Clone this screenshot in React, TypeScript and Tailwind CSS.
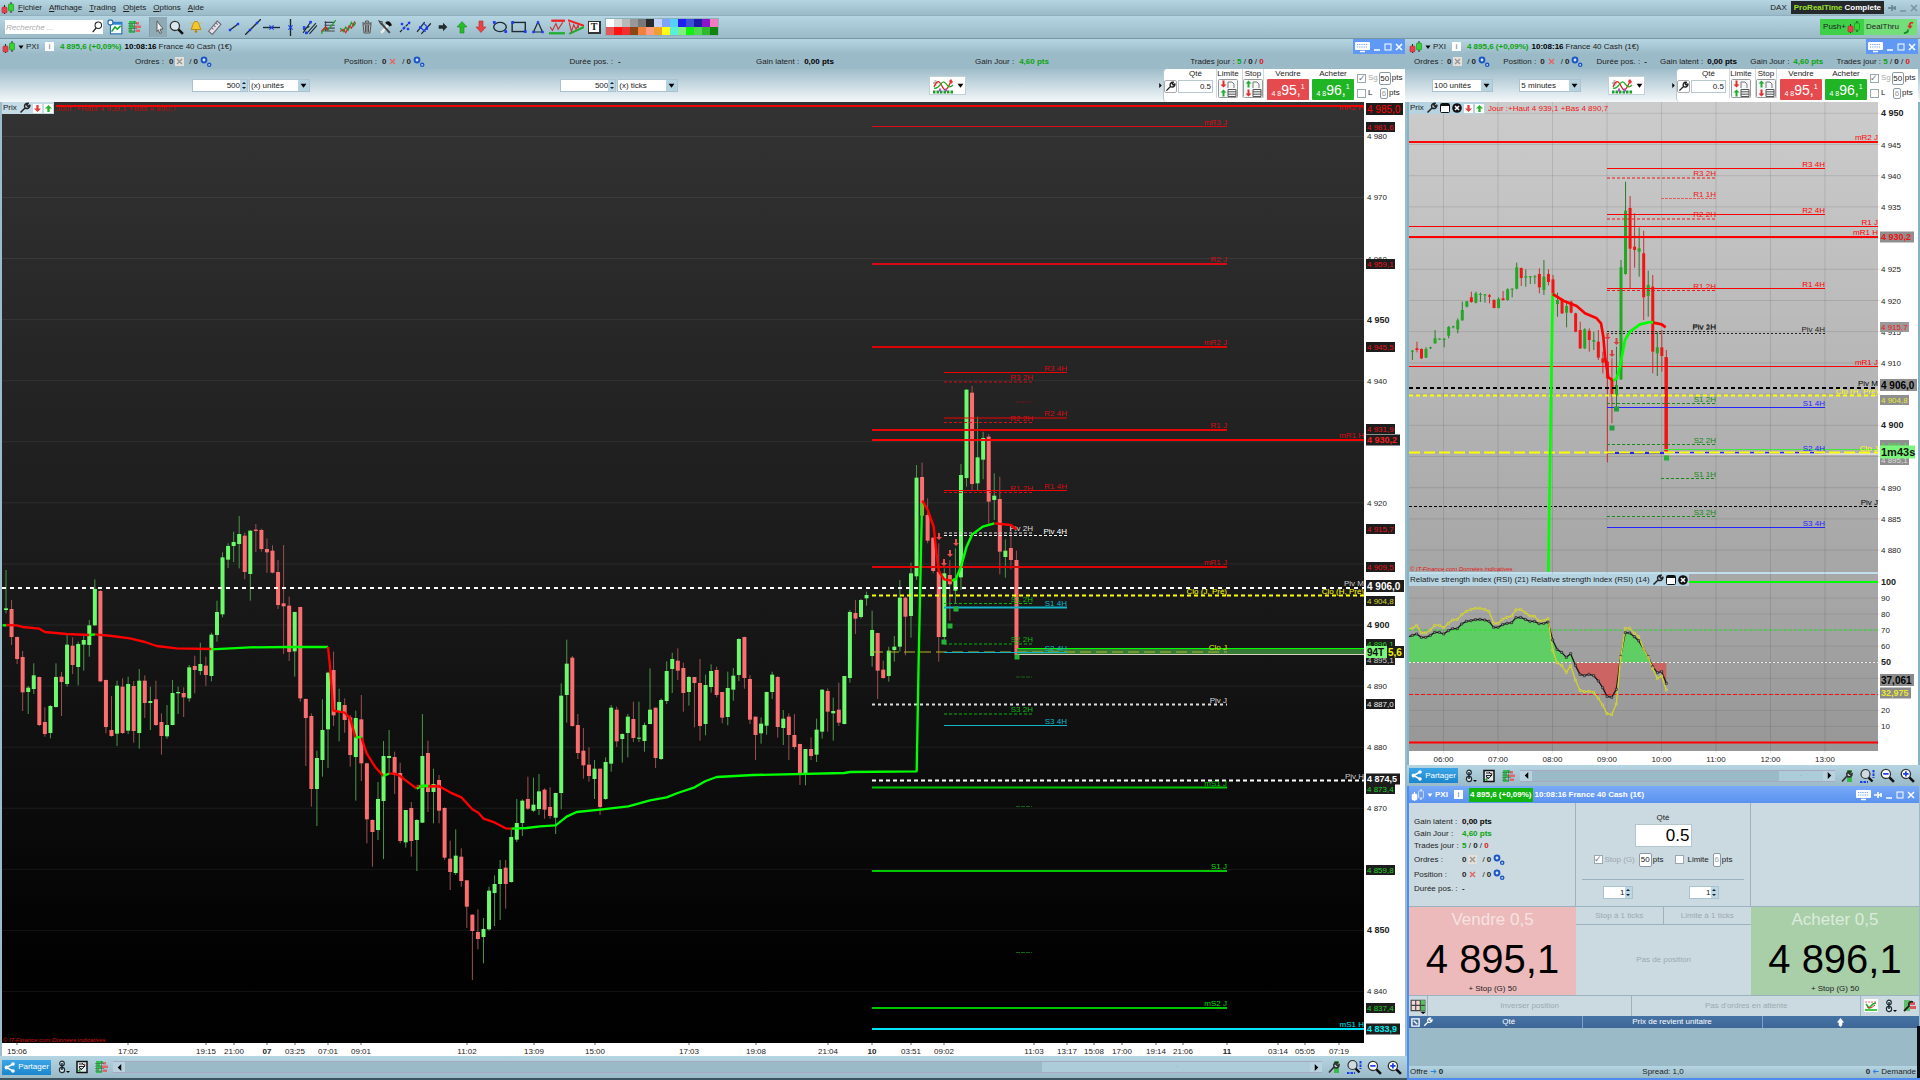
import React from "react";

type Candle = [number, number, number, number, number];

/* ---------- candle data: [up, high, bodyTop, bodyBottom, low] ---------- */

const MAIN_A: Candle[] = [
  [1, 270, 385, 390, 400], [0, 360, 387, 471, 495], [0, 470, 471, 537, 552], [0, 513, 531, 637, 693], [1, 618, 623, 636, 702],
  [1, 550, 586, 627, 642], [0, 590, 591, 735, 738], [0, 682, 726, 762, 770], [1, 675, 678, 759, 775], [1, 550, 591, 681, 683],
  [0, 576, 590, 606, 708], [1, 462, 494, 612, 620], [0, 472, 497, 555, 582], [1, 485, 492, 561, 616], [1, 465, 480, 494, 572],
  [1, 420, 436, 495, 530], [1, 298, 327, 436, 438], [0, 330, 333, 604, 606], [0, 599, 600, 741, 760], [0, 648, 750, 768, 770],
  [1, 602, 617, 761, 798], [0, 595, 620, 759, 762], [1, 590, 612, 752, 762], [0, 603, 618, 753, 788], [1, 567, 602, 759, 806],
  [0, 586, 602, 669, 714], [1, 620, 663, 669, 750], [0, 602, 658, 735, 738], [0, 700, 726, 768, 824], [1, 675, 735, 769, 776],
  [1, 600, 639, 735, 736], [1, 620, 636, 640, 702], [0, 622, 639, 652, 711], [1, 555, 562, 655, 665], [0, 527, 558, 570, 640],
  [1, 488, 552, 573, 585], [0, 530, 557, 585, 618], [1, 458, 464, 588, 604], [1, 362, 396, 465, 485], [1, 217, 232, 403, 412],
  [1, 190, 198, 239, 264], [1, 155, 186, 198, 246], [1, 108, 162, 192, 265], [0, 158, 167, 276, 298], [1, 151, 152, 282, 362],
  [0, 132, 149, 153, 216], [0, 146, 150, 207, 215], [0, 175, 207, 217, 278], [0, 196, 212, 278, 280], [0, 240, 276, 375, 387],
  [0, 195, 370, 379, 522], [0, 350, 377, 516, 543], [1, 395, 396, 514, 590], [0, 380, 381, 655, 665], [0, 655, 657, 714, 858],
  [0, 700, 708, 927, 980], [1, 812, 834, 927, 1038], [1, 658, 750, 840, 890], [1, 575, 578, 748, 864], [0, 515, 570, 706, 738],
  [1, 626, 666, 694, 784], [0, 655, 675, 720, 758], [0, 705, 712, 825, 860], [1, 692, 714, 831, 962], [0, 645, 718, 850, 903],
  [0, 848, 850, 1018, 1090], [0, 1018, 1020, 1056, 1160], [1, 906, 957, 1050, 1080], [1, 783, 828, 963, 1137], [1, 750, 828, 834, 880],
  [0, 815, 831, 885, 942], [0, 848, 879, 1083, 1090], [1, 990, 990, 1087, 1103], [0, 966, 984, 1083, 1130], [1, 1018, 1020, 1080, 1173],
];

const MAIN_B: Candle[] = [
  [1, 342, 468, 668, 669], [0, 422, 459, 576, 636], [1, 506, 552, 576, 670], [0, 525, 540, 632, 670], [0, 622, 624, 773, 780],
  [0, 722, 776, 816, 870], [1, 688, 767, 819, 825], [0, 745, 770, 843, 860], [0, 840, 841, 920, 984], [0, 943, 944, 993, 1140],
  [0, 928, 996, 1017, 1048], [1, 954, 987, 1011, 1090], [1, 860, 872, 988, 992], [1, 826, 852, 879, 978], [1, 780, 807, 852, 960],
  [0, 780, 803, 852, 926], [1, 690, 711, 846, 848], [1, 597, 669, 719, 726], [1, 598, 602, 669, 708], [0, 530, 597, 626, 630],
  [1, 533, 614, 632, 636], [1, 522, 574, 627, 645], [0, 565, 569, 629, 656], [0, 562, 621, 648, 656], [1, 578, 579, 653, 702],
  [1, 250, 287, 579, 628], [1, 119, 191, 285, 368], [0, 168, 173, 378, 380], [0, 342, 375, 459, 477], [0, 384, 452, 496, 536],
  [0, 442, 494, 528, 545], [1, 480, 506, 537, 597], [0, 506, 506, 621, 645], [1, 472, 486, 597, 600], [1, 315, 323, 491, 515],
  [0, 320, 329, 424, 441], [1, 400, 402, 417, 488], [1, 342, 350, 399, 472], [0, 305, 357, 414, 426], [1, 305, 413, 416, 426],
  [1, 368, 375, 423, 455], [1, 205, 329, 372, 373], [0, 323, 323, 474, 504], [1, 295, 300, 477, 480], [1, 184, 213, 303, 312],
  [1, 158, 177, 207, 279], [0, 145, 182, 212, 240], [0, 188, 204, 279, 335], [1, 228, 231, 276, 317], [0, 231, 231, 249, 382],
  [0, 177, 249, 378, 422], [1, 224, 255, 372, 406], [1, 193, 213, 261, 278], [0, 200, 210, 285, 292], [0, 276, 276, 353, 370],
  [1, 215, 264, 351, 376], [1, 204, 227, 269, 302], [1, 115, 117, 225, 243], [0, 110, 111, 234, 266], [0, 225, 237, 359, 372],
  [0, 350, 350, 405, 480], [1, 352, 371, 400, 431], [1, 275, 276, 377, 404], [1, 215, 224, 276, 297], [0, 228, 231, 381, 413],
  [1, 330, 356, 384, 435], [0, 340, 350, 405, 480], [0, 342, 405, 441, 448], [0, 431, 432, 521, 555], [1, 447, 447, 521, 556],
  [0, 412, 447, 468, 480], [1, 356, 389, 464, 486], [1, 268, 269, 395, 416], [0, 265, 273, 335, 395], [1, 293, 333, 340, 422],
  [0, 248, 329, 368, 378], [1, 228, 228, 372, 373], [1, 30, 36, 234, 248], [0, 0, 39, 56, 102], [1, -3, 0, 51, 56], [1, -25, -15, -5, 17],
];

const MAIN_C: Candle[] = [
  [1, 812, 870, 948, 980], [0, 878, 879, 992, 1077], [0, 962, 989, 1014, 1016], [1, 920, 932, 1008, 1025], [1, 888, 920, 930, 965],
  [1, 720, 773, 920, 935], [0, 770, 773, 830, 946], [1, 668, 700, 828, 893], [1, 375, 413, 709, 720], [0, 368, 411, 527, 530],
  [0, 475, 525, 602, 610], [0, 592, 593, 693, 700], [0, 610, 695, 891, 965], [1, 685, 700, 891, 905], [0, 660, 705, 733, 842],
  [1, 625, 715, 752, 790], [1, 372, 405, 712, 750], [1, 148, 149, 414, 440], [0, 138, 158, 432, 452], [1, 230, 352, 430, 452],
  [1, 275, 294, 359, 418], [0, 282, 290, 485, 552], [1, 400, 467, 480, 540], [0, 410, 477, 635, 703], [1, 598, 632, 651, 713],
  [0, 562, 624, 660, 688], [0, 632, 660, 945, 955],
];

const SMALL: Candle[] = [
  [1, 180, 182, 185, 210], [0, 155, 175, 180, 187], [0, 175, 177, 205, 207], [1, 172, 177, 203, 204], [1, 170, 172, 174, 177],
  [1, 120, 145, 160, 161], [1, 145, 146, 148, 149], [1, 145, 146, 150, 172], [1, 108, 111, 137, 145], [1, 107, 109, 111, 115],
  [1, 85, 91, 118, 130], [1, 35, 60, 91, 92], [1, 33, 34, 50, 52], [0, 5, 22, 36, 38], [1, 5, 10, 38, 40], [1, 8, 12, 14, 36],
  [1, 12, 13, 15, 38], [0, 12, 16, 20, 40], [0, 28, 30, 54, 55], [1, 22, 27, 54, 55], [0, 3, 25, 30, 32], [1, -5, -2, 30, 32],
  [1, -5, -4, -2, 22], [1, -82, -68, -4, -2], [0, -67, -66, -36, -12], [1, -62, -41, -37, -10], [1, -42, -41, -39, -18],
  [1, -45, -41, -39, -18], [0, -65, -48, -8, 10], [1, -90, -40, 0, 15], [0, -62, -48, -24, -14], [0, -45, -32, 10, 15],
  [1, 8, 30, 42, 80], [0, 25, 28, 70, 72], [1, 35, 48, 68, 112], [0, 32, 35, 68, 70], [0, 68, 70, 125, 127], [0, 95, 120, 175, 177],
  [1, 115, 118, 175, 177], [0, 115, 122, 150, 185], [1, 125, 150, 155, 180], [0, 120, 155, 203, 210], [0, 185, 205, 218, 250],
  [0, 150, 215, 265, 517], [0, 205, 270, 312, 400], [1, 170, 285, 315, 355], [1, -90, -68, 268, 270], [1, -325, -238, -48, -46],
  [0, -282, -246, -124, -4], [0, -230, -130, -120, -67], [1, -187, -125, -115, -40], [0, -178, -110, 22, 90], [1, -58, -15, 18, 80],
  [0, -45, -10, 185, 250], [1, 125, 172, 190, 258], [0, 120, 172, 198, 245], [0, 180, 203, 485, 487],
];

const RSI21 =
  "27,230 37,226 50,222 64,232 77,232 91,226 104,217 118,217 131,222 145,212 158,206 172,206 185,192 199,184 213,182 226,179 240,178 254,180 267,184 281,202 294,202 308,194 321,190 335,188 348,173 362,172 376,178 390,184 403,184 417,191 431,190 444,186 458,240 471,268 485,277 499,292 512,281 526,316 540,343 553,347 567,343 581,347 595,363 608,383 621,409 635,412 649,388 662,290 676,218 689,219 703,230 716,242 731,268 745,290 758,320 772,338 785,335 799,370";
const RSI14 =
  "27,206 37,205 50,196 64,219 77,219 91,210 104,196 118,196 131,203 145,190 158,180 172,178 185,164 199,154 213,148 226,145 240,145 254,148 267,154 281,190 294,190 308,178 321,172 335,168 348,149 362,148 376,158 390,168 403,168 417,183 431,182 444,176 458,270 471,308 485,316 499,337 512,317 526,360 540,391 553,395 567,394 581,397 595,415 608,435 621,461 635,464 649,432 662,292 676,205 689,205 703,220 716,230 731,268 745,292 758,325 772,355 785,348 799,390";

/* ---------- chart primitives ---------- */

function Candles({ data, start, x0, step, y0, up, down, upWick, downWick, w }: {
  data: Candle[]; start: number; x0: number; step: number; y0: number;
  up: string; down: string; upWick: string; downWick: string; w: number;
}) {
  return (
    <g>
      {data.map(([u, hi, top, bot, lo], i) => {
        const x = x0 + step * (start + i);
        return (
          <g key={i}>
            <rect x={x - 0.5} y={y0 + hi / 3} width={1} height={Math.max(1, (lo - hi) / 3)} fill={u ? upWick : downWick} />
            <rect x={x - w / 2} y={y0 + top / 3} width={w} height={Math.max(1, (bot - top) / 3)} fill={u ? up : down} />
          </g>
        );
      })}
    </g>
  );
}

function Level({ x1, x2, y, c, w = 1, dash, label, lc }: {
  x1: number; x2: number; y: number; c: string; w?: number; dash?: string; label?: string; lc?: string;
}) {
  return (
    <g>
      <line x1={x1} x2={x2} y1={y} y2={y} stroke={c} strokeWidth={w} strokeDasharray={dash} />
      {label && <text x={x2} y={y - 2} textAnchor="end" fontSize={8} fill={lc ?? c}>{label}</text>}
    </g>
  );
}

function Tag({ x, y, t, fg, bg, size = 8, bold, w }: {
  x: number; y: number; t: string; fg: string; bg: string; size?: number; bold?: boolean; w: number;
}) {
  const h = size + 2;
  return (
    <g>
      <rect x={x - 1} y={y - h / 2} width={w} height={h} fill={bg} />
      <text x={x} y={y + size * 0.36} fontSize={size} fill={fg} fontWeight={bold ? 700 : 400}>{t}</text>
    </g>
  );
}

const Down = ({ x, y, c }: { x: number; y: number; c: string }) => (
  <path d={`M${x - 1} ${y - 4}h2v4h2l-3 3-3-3h2z`} fill={c} />
);
const Sq = ({ x, y, c }: { x: number; y: number; c: string }) => (
  <rect x={x - 2.5} y={y - 2.5} width={5} height={5} fill={c} />
);

const RED = "#f00505";
const DRED = "#d80a14";
const TRED = "#e8141c";
const LIME = "#00ff00";

function MainChart() {
  const px = (p: number) => 625 - (p - 4900) * 6.108;
  const common = { x0: 6, step: 5.552, up: "#6cf96c", down: "#fb6e70", upWick: "#4a974a", downWick: "#9c5050", w: 4 };
  const ticks = [4980, 4970, 4960, 4950, 4940, 4930, 4920, 4910, 4900, 4890, 4880, 4870, 4860, 4850, 4840];
  const times: [string, number, boolean?][] = [
    ["15:06", 17], ["17:02", 128], ["19:15", 206], ["21:00", 234], ["07", 267, true], ["03:25", 295], ["07:01", 328], ["09:01", 361],
    ["11:02", 467], ["13:09", 534], ["15:00", 595], ["17:03", 689], ["19:08", 756], ["21:04", 828], ["10", 872, true], ["03:51", 911],
    ["09:02", 944], ["11:03", 1034], ["13:17", 1067], ["15:08", 1094], ["17:00", 1122], ["19:14", 1156], ["21:06", 1183],
    ["11", 1227, true], ["03:14", 1278], ["05:05", 1305], ["07:19", 1339],
  ];
  return (
    <svg viewBox="0 102 1407 954" preserveAspectRatio="xMinYMin meet" className="absolute inset-0 size-full" role="img" aria-label="France 40 Cash 500 ticks">
      <defs>
        <linearGradient id="dark" x1="0" y1="0" x2="0" y2="1">
          <stop offset="0" stopColor="#333333" />
          <stop offset="0.5" stopColor="#1a1a1a" />
          <stop offset="0.9" stopColor="#020202" />
          <stop offset="1" stopColor="#000000" />
        </linearGradient>
      </defs>
      <rect x={0} y={102} width={1407} height={954} fill="#fff" />
      <rect x={0} y={102} width={2} height={954} fill="#9bbccb" />
      <rect x={1405} y={102} width={2} height={954} fill="#9bbccb" />
      <rect x={2} y={102} width={1362} height={941} fill="url(#dark)" />
      {ticks.map((t) => (
        <g key={t}>
          <line x1={2} x2={1364} y1={px(t)} y2={px(t)} stroke="#fff" strokeOpacity={0.07} />
          {t !== 4930 && t !== 4860 && (
            <text x={1367} y={px(t) + 3} fontSize={t % 50 === 0 ? 9 : 8} fontWeight={t % 50 === 0 ? 700 : 400} fill="#222">
              {"4 " + (t - 4000)}
            </text>
          )}
        </g>
      ))}

      <text x={56} y={111} fontSize={8} fill="#b80d0d">Jour :+Haut 4 939,1 +Bas 4 890,7</text>
      <text x={1364} y={110} textAnchor="end" fontSize={8} fill={DRED}>mR2 H</text>
      <line x1={56} x2={1364} y1={106} y2={106} stroke={RED} strokeWidth={2} />

      <Candles data={MAIN_A} start={0} y0={480} {...common} />
      <Candles data={MAIN_B} start={75} y0={600} {...common} />
      <Candles data={MAIN_C} start={156} y0={340} {...common} />

      <rect x={1017} y={648} width={347} height={6} fill="#357a35" />
      <line x1={1017} x2={1364} y1={648.5} y2={648.5} stroke={LIME} />
      <line x1={1017} x2={1364} y1={654.5} y2={654.5} stroke="#d6d0c0" />

      <Level x1={872} x2={1227} y={126.5} c={DRED} label="mR3 J" />
      <Level x1={872} x2={1227} y={264} w={2} c={DRED} label="R2 J" />
      <Level x1={872} x2={1227} y={347} w={2} c="#dc0505" label="mR2 J" lc={DRED} />
      <Level x1={872} x2={1227} y={430} w={2} c="#e80505" label="R1 J" lc={DRED} />
      <Level x1={872} x2={1364} y={440} w={2} c="#ff0000" label="mR1 H" lc={DRED} />
      <Level x1={872} x2={1227} y={567} w={2} c="#dc0505" label="mR1 J" lc={DRED} />
      <Level x1={2} x2={1364} y={588} w={2} dash="4 4" c="#fff" label="Piv M" lc="#ccc" />
      <Level x1={872} x2={1227} y={595.5} w={2} dash="4 3" c="#ff0" label="Clo (J, Pré)" />
      <Level x1={1227} x2={1364} y={595.5} w={2} dash="4 3" c="#ff0" label="Clo (H, Pré)" />
      <Level x1={872} x2={1227} y={652} dash="11 5" c="#b5b52a" label="Clo J" lc="#e8e800" />
      <Level x1={872} x2={1227} y={704.5} w={2} dash="3 3" c="#ddd" label="Piv J" lc="#ddd" />
      <Level x1={872} x2={1364} y={780.5} w={2} dash="4 3" c="#fff" label="Piv H" lc="#ccc" />
      <Level x1={872} x2={1227} y={787.5} w={2} c="#00c800" label="mS1 J" />
      <Level x1={872} x2={1227} y={871} w={2} c="#00c800" label="S1 J" lc="#0d0" />
      <Level x1={872} x2={1227} y={1008} w={2} c="#00c800" label="mS2 J" lc="#0d0" />
      <Level x1={872} x2={1364} y={1029} w={2} c="#00e5f5" label="mS1 H" />

      <Level x1={944} x2={1067} y={372.5} c={RED} label="R3 4H" lc={DRED} />
      <Level x1={944} x2={1067} y={418} c={RED} label="R2 4H" lc={DRED} />
      <Level x1={944} x2={1067} y={490.5} c={RED} label="R1 4H" lc={DRED} />
      <Level x1={944} x2={1067} y={535.5} dash="3 2" c="#fff" label="Piv 4H" />
      <Level x1={944} x2={1067} y={607.5} w={2} c="#14b4c8" label="S1 4H" />
      <Level x1={944} x2={1067} y={652.5} c="#14b4c8" label="S2 4H" />
      <Level x1={944} x2={1067} y={725.5} c="#14b4c8" label="S3 4H" />
      <Level x1={944} x2={1033} y={382} dash="3 2" c={DRED} label="R3 2H" />
      <Level x1={944} x2={1033} y={422.5} dash="3 2" c={DRED} label="R2 2H" />
      <Level x1={944} x2={1033} y={492.5} dash="3 2" c={DRED} label="R1 2H" />
      <Level x1={944} x2={1033} y={533} dash="3 2" c="#ddd" label="Piv 2H" />
      <Level x1={944} x2={1033} y={603.5} dash="3 2" c="#0ab40a" label="S1 2H" />
      <Level x1={944} x2={1033} y={644} dash="3 2" c="#0ab40a" label="S2 2H" />
      <Level x1={944} x2={1033} y={714} dash="3 2" c="#0ab40a" label="S3 2H" />
      <Level x1={1016} x2={1032} y={402} dash="4 1" c="#6a1520" />
      <Level x1={1016} x2={1032} y={677} dash="4 1" c="#176117" />
      <Level x1={1016} x2={1032} y={806.5} dash="4 1" c="#176117" />
      <Level x1={1016} x2={1032} y={952.5} dash="4 1" c="#176117" />

      <g fill="none" strokeWidth={7} strokeLinejoin="round">
        <g transform="translate(0 480) scale(0.33333)">
          <polyline stroke={LIME} points="8,436 20,436" />
          <polyline stroke="#f00" points="18,435 50,436 68,441 118,446 135,456 200,462 268,465" />
          <polyline stroke="#f00" points="285,463 335,468 390,475 435,486 470,498 530,505 634,507" />
          <polyline stroke={LIME} points="268,465 285,463" />
          <polyline stroke={LIME} points="634,508 750,502 868,501 984,501" />
          <polyline stroke="#f00" points="984,501 990,560 1000,692 1034,698 1050,715 1067,773" />
          <polyline stroke="#f00" points="1084,772 1100,820 1125,860 1150,888" />
          <polyline stroke="#f00" points="1167,881 1184,881 1200,888 1225,907 1250,926" />
          <polyline stroke={LIME} points="1067,773 1084,771" />
          <polyline stroke={LIME} points="1150,888 1167,881" />
          <polyline stroke={LIME} points="1250,926 1268,917 1284,916" />
          <polyline stroke="#f00" points="1284,918 1320,918" />
        </g>
        <g transform="translate(420 600) scale(0.33333)">
          <polyline stroke="#f00" points="-10,558 60,560 90,577 124,592 157,628 175,638 191,656 225,668 257,685 274,686" />
          <polyline stroke={LIME} points="-3,559 25,558" />
          <polyline stroke={LIME} points="274,686 320,684 360,679 407,676 440,650 470,636 540,629 625,619 690,601 740,592 773,579 824,562 857,543 890,531 1000,525 1273,519 1290,516 1490,514 1496,180 1506,-290" />
        </g>
        <g transform="translate(860 340) scale(0.35076 0.33333)">
          <polyline stroke="#f00" points="178,482 193,510 210,560 218,640 225,695 240,718 262,722" />
          <polyline stroke={LIME} points="262,722 273,718 288,680 304,620 320,583 350,560 383,550" />
          <polyline stroke="#f00" points="383,550 430,555 446,568" />
        </g>
      </g>

      <Down x={939} y={537} c="#e8504f" />
      <Down x={944} y={563} c="#e8504f" />
      <Down x={950} y={554} c="#e8504f" />
      <Down x={956} y={543} c="#e8504f" />
      <Sq x={944} y={642} c="#22b53a" />
      <Sq x={950} y={626} c="#22b53a" />
      <Sq x={956} y={609} c="#22b53a" />
      <Sq x={1017} y={657} c="#22b53a" />
      <text x={3} y={1042} fontSize={6} fontStyle="italic" fill="#d01010">© IT-Finance.com Données indicatives</text>

      <Tag x={1367} y={109} w={37} t="4 985,0" fg="#f00" bg="#1d1d1d" size={10} />
      <Tag x={1367} y={127} w={29} t="4 981,6" fg={TRED} bg="#1d1d1d" />
      <Tag x={1367} y={264} w={29} t="4 959,1" fg={TRED} bg="#1d1d1d" />
      <Tag x={1367} y={347} w={29} t="4 945,5" fg={TRED} bg="#1d1d1d" />
      <Tag x={1367} y={429} w={29} t="4 931,9" fg={TRED} bg="#1d1d1d" />
      <Tag x={1367} y={440} w={34} t="4 930,2" fg="#f02020" bg="#1d1d1d" size={9} bold />
      <Tag x={1367} y={529} w={29} t="4 915,7" fg={TRED} bg="#1d1d1d" />
      <Tag x={1367} y={567} w={29} t="4 909,5" fg={TRED} bg="#1d1d1d" />
      <Tag x={1367} y={601} w={29} t="4 904,8" fg="#d8d82a" bg="#1d1d1d" />
      <Tag x={1367} y={586} w={38} t="4 906,0" fg="#fff" bg="#1d1d1d" size={10} bold />
      <Tag x={1367} y={644} w={29} t="4 896,1" fg="#2c2" bg="#1d1d1d" />
      <Tag x={1367} y={660} w={29} t="4 895,1" fg="#ccc" bg="#1d1d1d" />
      <Tag x={1388} y={652} w={17} t="5,6" fg="#f2f20a" bg="#1d1d1d" size={10} bold />
      <Tag x={1367} y={652} w={21} t="94T" fg="#111" bg="#7cf57c" size={10} bold />
      <Tag x={1367} y={704} w={29} t="4 887,0" fg="#eee" bg="#1d1d1d" />
      <Tag x={1367} y={789} w={29} t="4 873,4" fg="#2c2" bg="#1d1d1d" />
      <Tag x={1367} y={779} w={34} t="4 874,5" fg="#fff" bg="#1d1d1d" size={9} bold />
      <Tag x={1367} y={870} w={29} t="4 859,8" fg="#2c2" bg="#1d1d1d" />
      <Tag x={1367} y={1008} w={29} t="4 837,4" fg="#2c2" bg="#1d1d1d" />
      <Tag x={1367} y={1029} w={34} t="4 833,9" fg="#0ee" bg="#1d1d1d" size={9} bold />

      {times.map(([t, x, b], i) => (
        <g key={i}>
          <line x1={x} x2={x} y1={1043} y2={1045} stroke="#666" />
          <text x={x} y={1054} textAnchor="middle" fontSize={8} fontWeight={b ? 700 : 400} fill="#222">{t}</text>
        </g>
      ))}
    </svg>
  );
}

function Dots({ points, c }: { points: string; c: string }) {
  return (
    <g>
      {points.split(" ").slice(1).map((p) => {
        const [x, y] = p.split(",").map(Number);
        return <rect key={p} x={x - 3} y={y - 3} width={6} height={6} fill="#a3a3a3" stroke={c} strokeWidth={2} />;
      })}
    </g>
  );
}

function SideChart() {
  const px = (p: number) => 425.3 - (p - 4900) * 6.24;
  const rs = (v: number) => 742.5 - v * 1.605;
  const prices = [4950, 4945, 4940, 4935, 4930, 4925, 4920, 4915, 4910, 4905, 4900, 4895, 4890, 4885, 4880];
  const hours = ["06:00", "07:00", "08:00", "09:00", "10:00", "11:00", "12:00", "13:00"];
  return (
    <svg viewBox="1407 102 513 663" preserveAspectRatio="xMinYMin meet" className="absolute inset-0 size-full" role="img" aria-label="France 40 Cash 5 minutes">
      <defs>
        <linearGradient id="grey" x1="0" y1="0" x2="0" y2="1">
          <stop offset="0" stopColor="#cccccc" />
          <stop offset="1" stopColor="#a6a6a6" />
        </linearGradient>
        <linearGradient id="grey2" x1="0" y1="0" x2="0" y2="1">
          <stop offset="0" stopColor="#a8a8a8" />
          <stop offset="1" stopColor="#979797" />
        </linearGradient>
        <clipPath id="over"><rect x={0} y={0} width={900} height={308} /></clipPath>
        <clipPath id="under"><rect x={0} y={308} width={900} height={300} /></clipPath>
      </defs>
      <rect x={1407} y={102} width={513} height={663} fill="#fff" />
      <rect x={1407} y={102} width={2} height={663} fill="#86b2c6" />
      <rect x={1918} y={102} width={2} height={663} fill="#86b2c6" />
      <rect x={1409} y={102} width={469} height={470} fill="url(#grey)" />
      <rect x={1409} y={572} width={469} height={2} fill="#bfe0ec" />
      <rect x={1409} y={574} width={469} height={177} fill="url(#grey2)" />
      {prices.map((p) => (
        <g key={p}>
          <line x1={1409} x2={1880} y1={px(p)} y2={px(p)} stroke="#000" strokeOpacity={0.1} />
          {p !== 4930 && p !== 4905 && p !== 4895 && (
            <text x={1881} y={px(p) + 3} fontSize={p % 50 === 0 ? 9 : 8} fontWeight={p % 50 === 0 ? 700 : 400} fill="#222">
              {"4 " + (p - 4000)}
            </text>
          )}
        </g>
      ))}
      {hours.map((h, i) => (
        <g key={h}>
          <line x1={1443.5 + i * 54.5} x2={1443.5 + i * 54.5} y1={102} y2={753} stroke="#000" strokeOpacity={0.1} />
          <text x={1443.5 + i * 54.5} y={762} fontSize={8} textAnchor="middle" fill="#222">{h}</text>
        </g>
      ))}

      <Candles data={SMALL} start={0} x0={1412.4} step={4.535} y0={290} up="#22a822" down="#f01414" upWick="#2c7a2c" downWick="#c83232" w={3} />
      <rect x={1664.5} y={357} width={3} height={95} fill="#f01414" />

      <Level x1={1409} x2={1878} y={142} w={2} c="#fa0808" label="mR2 J" />
      <Level x1={1607} x2={1825} y={168.5} c="#ff0000" label="R3 4H" />
      <Level x1={1607} x2={1716} y={178} dash="3 2" c="#f01414" label="R3 2H" />
      <Level x1={1661} x2={1716} y={198.5} dash="3 1" c="#e06060" label="R1 1H" lc="#f01414" />
      <Level x1={1607} x2={1825} y={214.5} c="#ff0000" label="R2 4H" />
      <Level x1={1607} x2={1716} y={219} dash="3 2" c="#f01414" label="R2 2H" />
      <Level x1={1409} x2={1878} y={226.5} c="#ff0000" label="R1 J" />
      <Level x1={1409} x2={1878} y={237} w={2} c="#ff0000" label="mR1 H" />
      <Level x1={1607} x2={1825} y={288.5} c="#ff0000" label="R1 4H" />
      <Level x1={1607} x2={1716} y={290.5} dash="3 2" c="#f01414" label="R1 2H" />
      <Level x1={1607} x2={1716} y={331.5} dash="2 2" c="#222" label="Piv 2H" />
      <Level x1={1607} x2={1825} y={333.5} dash="2 2" c="#222" label="Piv 4H" />
      <text x={1716} y={329} textAnchor="end" fontSize={8} fill="#222">Piv 1H</text>
      <Level x1={1409} x2={1878} y={366.5} c="#ff0000" label="mR1 J" />
      <Level x1={1409} x2={1878} y={388} w={2} dash="4 3" c="#000" label="Piv M" />
      <Level x1={1409} x2={1878} y={395.5} w={2} dash="4 3" c="#ff0" label="Clo (H, Pré)" />
      <Level x1={1607} x2={1716} y={403.5} dash="3 2" c="#178a17" label="S1 2H" />
      <Level x1={1607} x2={1825} y={407.5} c="#2424ff" label="S1 4H" />
      <Level x1={1607} x2={1716} y={444.5} dash="3 2" c="#178a17" label="S2 2H" />
      <Level x1={1664} x2={1878} y={449.5} c="#3be83b" />
      <Level x1={1607} x2={1825} y={453} w={2} c="#2424ff" label="S2 4H" />
      <Level x1={1664} x2={1878} y={454} c="#fff" />
      <Level x1={1409} x2={1878} y={452.5} w={2} dash="11 4" c="#ff0" label="Clo J" />
      <Level x1={1661} x2={1716} y={478.5} dash="3 2" c="#178a17" label="S1 1H" />
      <Level x1={1409} x2={1878} y={506.5} dash="3 2" c="#000" label="Piv J" />
      <Level x1={1607} x2={1716} y={516.5} dash="3 2" c="#178a17" label="S3 2H" />
      <Level x1={1607} x2={1825} y={527.5} c="#2424ff" label="S3 4H" />

      <g transform="translate(1400 290) scale(0.33333)" fill="none" strokeWidth={8} strokeLinejoin="round">
        <polyline stroke={LIME} points="445,845 450,540 458,10" />
        <polyline stroke="#f00" points="458,12 490,32 530,48 555,70 590,85 603,100 610,140 615,200 625,262 640,272" />
        <polyline stroke={LIME} points="640,272 650,265 660,230 675,150 690,125 720,103 750,96 760,98" />
        <polyline stroke="#f00" points="760,98 785,103 797,112" />
      </g>
      <Down x={1607.5} y={337} c="#e03c3c" />
      <Down x={1612} y={354} c="#e03c3c" />
      <Down x={1616.5} y={342} c="#e03c3c" />
      <Sq x={1612} y={428} c="#22a040" />
      <Sq x={1616.5} y={409} c="#22a040" />
      <Sq x={1666.5} y={458} c="#22b53a" />

      <text x={1488} y={111} fontSize={8} fill="#f01414">Jour :+Haut 4 939,1 +Bas 4 890,7</text>
      <text x={1410} y={571} fontSize={6} fontStyle="italic" fill="#e01414">© IT-Finance.com Données indicatives</text>

      <Tag x={1881} y={237} w={34} t="4 930,2" fg="#f01414" bg="#8f8f8f" size={9} bold />
      <Tag x={1881} y={327} w={29} t="4 915,7" fg="#f01414" bg="#9a9a9a" />
      <Tag x={1881} y={400} w={29} t="4 904,8" fg="#e8e832" bg="#8f8f8f" />
      <Tag x={1881} y={385} w={37} t="4 906,0" fg="#000" bg="#8f8f8f" size={10} bold />
      <Tag x={1881} y={445} w={29} t="4 896,1" fg="#3be83b" bg="#8f8f8f" />
      <Tag x={1881} y={460} w={29} t="4 895,1" fg="#ddd" bg="#8f8f8f" />
      <Tag x={1881} y={452} w={35} t="1m43s" fg="#111" bg="#7cf57c" size={11} bold />

      {[100, 90, 80, 70, 60, 50, 40, 30, 20, 10].map((v) => (
        <g key={v}>
          <line x1={1409} x2={1880} y1={rs(v)} y2={rs(v)} stroke="#000" strokeOpacity={0.08} />
          {v !== 30 && v !== 40 && (
            <text x={1881} y={rs(v) + 3} fontSize={v % 50 === 0 ? 9 : 8} fontWeight={v % 50 === 0 ? 700 : 400} fill="#222">{v}</text>
          )}
        </g>
      ))}
      <Level x1={1409} x2={1878} y={582} w={2} c={LIME} />
      <g transform="translate(1400 560) scale(0.33333)">
        <polygon clipPath="url(#over)" points={RSI21 + " 799,308 27,308"} fill="#5fce64" />
        <polygon clipPath="url(#under)" points={RSI21 + " 799,308 27,308"} fill="#cc6464" />
      </g>
      <Level x1={1409} x2={1878} y={630} dash="3 2" c="#1de81d" />
      <Level x1={1409} x2={1878} y={662.5} dash="2 2" c="#eee" />
      <Level x1={1409} x2={1878} y={694.5} dash="4 2" c="#f01414" />
      <Level x1={1409} x2={1878} y={742.5} w={2} c="#ff0000" />
      <g transform="translate(1400 560) scale(0.33333)" fill="none" strokeWidth={4} strokeLinejoin="round">
        <polyline points={RSI21} stroke="#1b1b1b" />
        <polyline points={RSI14} stroke="#d2d228" />
        <Dots points={RSI21} c="#1b1b1b" />
        <Dots points={RSI14} c="#e0e02a" />
      </g>
      <Tag x={1881} y={693} w={31} t="32,975" fg="#e8e832" bg="#8a8a8a" size={9} bold />
      <Tag x={1881} y={680} w={34} t="37,061" fg="#000" bg="#8a8a8a" size={10} bold />
    </svg>
  );
}

/* ---------- icons ---------- */

const Svg = ({ children, s = 14, vb = 14 }: { children: React.ReactNode; s?: number; vb?: number }) => (
  <svg width={s} height={s} viewBox={`0 0 ${vb} ${vb}`} fill="none" aria-hidden="true" className="shrink-0">{children}</svg>
);
const B = "#1c3cf0";
const K = "#1d2a33";

const LogoIcon = ({ white }: { white?: boolean }) => (
  <svg width="14" height="12" viewBox="0 0 14 12" fill="none" aria-hidden="true" className="shrink-0">
    <path d="M3.500 3v9M10 0v11" stroke={white ? "#fff" : K} />
    <rect x="1" y="5" width="5" height="6" rx="1" fill={white ? "#fff" : "#e8414b"} stroke={white ? "#fff" : "#a82a32"} strokeWidth=".6" />
    <rect x="7.500" y="2" width="5" height="7" rx="1" fill={white ? "#6f9ff2" : "#35d535"} stroke={white ? "#fff" : "#158a15"} strokeWidth=".6" />
  </svg>
);
const Wrench = ({ c = "#222", s = 12 }: { c?: string; s?: number }) => (
  <Svg s={s} vb={12}>
    <path d="M1.500 10.500 6 6M6 6C4.600 3.500 6.500.8 9.200 1.300L7.800 3l1.200 1.400 1.900-1.200C11 5.700 8.500 7.400 6 6" stroke={c} strokeWidth="1.500" strokeLinejoin="round" />
  </Svg>
);
const Gears = () => (
  <Svg s={12} vb={12}>
    <circle cx="4" cy="4" r="2.400" fill="#d5e4ff" stroke="#1b56c4" strokeWidth="2" />
    <circle cx="9.200" cy="8.800" r="1.600" fill="#d5e4ff" stroke="#1b56c4" strokeWidth="1.400" />
  </Svg>
);
const Cross = ({ c, bg }: { c: string; bg: string }) => (
  <span className={bg}><Svg s={7} vb={7}><path d="M1 1l5 5M6 1 1 6" stroke={c} strokeWidth="1.500" /></Svg></span>
);
const Tri = ({ c = "#000", d = "down", s = 6 }: { c?: string; d?: "down" | "left" | "right"; s?: number }) => (
  <Svg s={s} vb={6}><path d={d === "down" ? "M.5 1.500h5L3 5z" : d === "left" ? "M4.500 0v6L1.500 3z" : "M1.500 0v6l3-3z"} fill={c} /></Svg>
);
const Arrow = ({ up }: { up?: boolean }) => (
  <span className="flex size-[9px] items-center justify-center bg-white">
    <Svg s={7} vb={6}><path d={up ? "M3 0l3 3H4v3H2V3H0z" : "M3 6l3-3H4V0H2v3H0z"} fill={up ? "#22b422" : "#e83c3c"} /></Svg>
  </span>
);
const WinIcon = () => <Svg s={10} vb={10}><rect x=".5" y=".5" width="9" height="9" rx="1" fill="#fff" stroke="#111" /><path d="M1 2h8" stroke="#111" strokeWidth="2" /></Svg>;
const CloseIcon = () => <Svg s={10} vb={10}><circle cx="5" cy="5" r="4.800" fill="#111" /><path d="M3 3l4 4M7 3 3 7" stroke="#fff" strokeWidth="1.600" /></Svg>;
const Keyboard = () => (
  <Svg s={15} vb={15}><rect x="0" y="3" width="15" height="8" rx="1" fill="#fff" /><path d="M2 5.500h11M2 8h11" stroke="#6f9ff2" strokeDasharray="1.200 1" /><path d="M5 12.500h5" stroke="#fff" strokeWidth="1.500" /></Svg>
);
const WinCtl = ({ pin, c = "#fff" }: { pin?: boolean; c?: string }) => (
  <span className="flex items-center gap-[3px]">
    {pin && <button aria-label="Épingler"><Svg s={8} vb={8}><path d="M0 4h3M4 1v6M4 4h3M7 2v4" stroke={c} strokeWidth="1.600" /></Svg></button>}
    <button aria-label="Réduire"><Svg s={8} vb={8}><path d="M1 7h6" stroke={c} strokeWidth="1.500" /></Svg></button>
    <button aria-label="Agrandir"><Svg s={8} vb={8}><rect x="1" y="1" width="6" height="6" stroke={c} /></Svg></button>
    <button aria-label="Fermer"><Svg s={8} vb={8}><path d="M1 1l6 6M7 1 1 7" stroke={c} strokeWidth="1.500" /></Svg></button>
  </span>
);
const ChainIcon = () => (
  <Svg s={14}><circle cx="6" cy="3.500" r="2.300" fill="#dce6ea" stroke={K} strokeWidth="1.200" /><circle cx="6" cy="10" r="2.600" fill="#dce6ea" stroke={K} strokeWidth="1.200" /><path d="M6 3v7" stroke={K} strokeWidth="1.500" /><path d="M10 11h4l-2 2z" fill="#000" /></Svg>
);
const NoteIcon = () => (
  <Svg s={14}><rect x="2" y="1.500" width="10" height="11" fill="#dfe9ee" stroke="#111" strokeWidth="1.500" /><path d="M4 4h4M4 6.500h6M4 9h3M7 3l3 3M6 10l4-4M4 7l3 3" stroke="#222" /><path d="M3.500 10l2 1.500" stroke="#0a0" strokeWidth="1.500" /><path d="M9 4l1.500 1" stroke="#c22" /></Svg>
);
const BookIcon = () => (
  <Svg s={14}>
    <path d="M2 1h7v2.500H6v2.500H8v2.500H5V11h2v2H2z" fill="#35bf50" />
    <path d="M9 2h3v2.500H9zM8 5.500h6V8H8zM9 9.500h4V12H9z" fill="#e0666a" />
    <path d="M1 3.500h9M1 6h7M1 8.500h9M1 11h8M7.500 1v12" stroke="#3d6b48" strokeWidth=".6" />
  </Svg>
);
const Zoom = ({ sign, c = "#dbe7ee" }: { sign?: "+" | "-"; c?: string }) => (
  <Svg s={15} vb={14}><path d="M8 8l5 5" stroke="#111" strokeWidth="2.400" /><circle cx="5.500" cy="5.500" r="4.300" fill={c} stroke="#333" strokeWidth="1.200" />{sign && <path d={sign === "+" ? "M3 5.500h5M5.500 3v5" : "M3 5.500h5"} stroke={B} strokeWidth="1.600" />}</Svg>
);
const FitZoom = () => (
  <Svg s={16} vb={16}><path d="M9 9l4.500 4.500" stroke="#111" strokeWidth="2.400" /><circle cx="6.500" cy="6" r="4.500" fill="#cfdbe0" stroke="#333" strokeWidth="1.200" /><path d="M14.500 2v8M1 14h8" stroke={B} strokeWidth="2" strokeDasharray="2.500 1" /></Svg>
);
const GreenWrench = () => (
  <Svg s={14}><rect x="7" y="1" width="5" height="12" fill="#38b84a" /><path d="M2 12.500 7 7C6 4 8 2 10.500 2.500L9 4.500l1.500 1.300L12 5c0 3-2.500 3.500-5 2" stroke="#333" strokeWidth="1.700" fill="#e8eef0" /></Svg>
);
const WaveIcon = () => (
  <svg width="24" height="16" viewBox="0 0 24 16" fill="none" aria-hidden="true">
    <rect width="24" height="16" fill="#fff" /><path d="M2 5h5M4.500 2v6" stroke="#bbb" strokeWidth="2" />
    <path d="M3 9c3-7 5-7 8-1s5 5 9-5" stroke="#d22" strokeWidth="1.300" /><path d="M3 10c5 2 7-7 10-6s4 8 9 3" stroke="#2a2" strokeWidth="1.300" />
    <path d="M2 14h20" stroke="#1ba02b" strokeWidth="3" strokeDasharray="2.500 1" /><path d="M9 10.500v3M15 10.500v3" stroke="#b44ad0" strokeWidth="2" />
    <path d="M18 3l2-2 2 3-2 2z" fill="#e33" />
  </svg>
);
const LimitIcon = ({ a, b }: { a: string; b: string }) => (
  <svg width="20" height="19" viewBox="0 0 20 19" fill="none" aria-hidden="true">
    <rect x=".5" y=".5" width="19" height="18" rx="1" fill="#f5f7f8" stroke="#9a9a9a" />
    <path d="M5.500 1.500l3 3h-2v4h-2v-4h-2z" fill={a} transform={a === "#e22c2c" ? "rotate(180 5.500 5)" : undefined} />
    <path d="M5.500 10.500l3 3h-2v4h-2v-4h-2z" fill={b} transform={b === "#e22c2c" ? "rotate(180 5.500 14)" : undefined} />
    <path d="M10 9V3h4l2 2v4" stroke="#777" /><path d="M10 10.500h8v7h-8zM10 12.800h8M10 15.200h8" stroke="#555" />
  </svg>
);

const dot = (x: number, y: number) => <rect x={x - 1.2} y={y - 1.2} width={2.4} height={2.4} fill={B} />;
const TOOLS: [string, React.ReactNode][] = [
  ["Loupe", <Zoom key="z" />],
  ["Alerte", <Svg key="a"><path d="M7 1.500c3.500 0 3 5 5 8H2c2-3 1.500-8 5-8z" fill="#f4c72a" stroke="#b98a12" /><circle cx="7" cy="11.500" r="1.400" fill="#b98a12" /><path d="M1 2l1 1.500M13 2l-1 1.500" stroke="#e8b21a" /></Svg>],
  ["Règle", <Svg key="r" s={15}><path d="M1.500 10.500 9.500 1l3.500 3-8 9.500z" fill="#e6e4e8" stroke="#6d6875" /><path d="M4.500 7.500l1.500 1.300M6.500 5.200l1.500 1.300M8.500 3l1.500 1.300" stroke="#6d6875" /></Svg>],
  ["Segment", <Svg key="s"><path d="M3 10l8-6" stroke={K} strokeWidth="1.300" />{dot(3, 10)}{dot(11, 4)}</Svg>],
  ["Droite", <Svg key="d" s={16} vb={16}><path d="M0 16 16 0" stroke={K} strokeWidth="1.300" />{dot(5, 11)}{dot(12, 4)}</Svg>],
  ["Horizontale", <Svg key="h" s={17} vb={16}><path d="M0 8h16" stroke={K} strokeWidth="1.300" /><path d="M6 6l4 4M10 6l-4 4" stroke={B} /></Svg>],
  ["Verticale", <Svg key="v" s={17} vb={16}><path d="M8 0v16" stroke={K} strokeWidth="1.300" /><path d="M6 6l4 4M10 6l-4 4" stroke={B} /></Svg>],
  ["Canal", <Svg key="c" s={15}><path d="M1 12 8 2M4 13l9-10M7 13l7-8M1 9l6-3" stroke={K} />{dot(2, 7)}{dot(8, 2)}{dot(4, 12)}</Svg>],
  ["Retracement", <Svg key="f" s={16}><path d="M3 3h9M3 5.500h9M3 8h9M3 10.500h9M4 2v9" stroke="#445" /><path d="M0 13l4-5 2 2 7-9" stroke="#1aa52a" /><path d="M0 11l4-4 2 3" stroke="#c22" /></Svg>],
  ["Vagues", <Svg key="w" s={16}><path d="M0 8l3 3 2-4 2 3 3-7 2 3 2-3" stroke="#1aa52a" strokeWidth="1.200" /><path d="M0 11l3-2 2 3 3-6 2 2 3-6" stroke="#c33" strokeWidth="1.100" /></Svg>],
  ["Supprimer", <Svg key="t"><path d="M3 4h8l-1 9H4zM2 3h10M5.500 2.500V1h3v1.500M5.500 5v7M7 5v7M8.500 5v7" fill="#b6bcc0" stroke="#555" /></Svg>],
  ["Outils", <Svg key="o" s={15}><path d="M3 12 10 4" stroke="#eee" strokeWidth="2.200" /><path d="M2 2l9 10" stroke="#444" strokeWidth="2" /><path d="M7 2c3-2 5 0 6 3l-2 1-4-3z" fill="#111" /><path d="M1 1l3 1-1 2z" fill="#fff" stroke="#444" /></Svg>],
  ["Point", <Svg key="p"><path d="M2 12 12 2" stroke={K} strokeWidth="1.300" strokeDasharray="3 1" />{dot(4, 4)}{dot(10, 9)}{dot(6, 8)}{dot(11, 3)}</Svg>],
  ["Parallèles", <Svg key="pp" s={15}><path d="M1 11 8 2M5 13l9-10" stroke={K} strokeWidth="1.200" /><path d="M4 7l5 4M7 3l4 4" stroke={B} />{dot(4, 7)}{dot(10, 8)}</Svg>],
  ["Flèche droite", <Svg key="fr" s={12}><path d="M2 5h5V2l5 5-5 5V9H2z" fill="#222b30" /></Svg>],
  ["Flèche haut", <Svg key="fh"><path d="M5 13V7H2l5-5.500L12 7H9v6z" fill="#25bd2a" stroke="#23862a" strokeWidth=".6" /></Svg>],
  ["Flèche bas", <Svg key="fb"><path d="M5 1v6H2l5 5.500L12 7H9V1z" fill="#ee4040" stroke="#a33" strokeWidth=".6" /></Svg>],
  ["Ellipse", <Svg key="e" s={16}><ellipse cx="7" cy="7" rx="5.500" ry="4" stroke={K} strokeWidth="1.200" />{dot(2, 3)}{dot(12, 11)}</Svg>],
  ["Rectangle", <Svg key="re" s={16}><rect x="1" y="3" width="11.500" height="8" stroke={K} strokeWidth="1.200" />{dot(1.5, 3)}{dot(12.5, 11)}</Svg>],
  ["Triangle", <Svg key="tr"><path d="M7 2l4.500 10h-9z" stroke={K} strokeWidth="1.200" />{dot(7, 2.5)}{dot(2.5, 12)}{dot(11.5, 12)}</Svg>],
  ["Figure", <Svg key="fi" s={16}><path d="M2 1.500h12" stroke="#e22" strokeWidth="2" /><path d="M0 12.500h14" stroke="#1fae2f" strokeWidth="2" /><path d="M1 7l2 3 3-6 2 5 4-6" stroke="#c33" /></Svg>],
  ["Biseau", <Svg key="bi" s={16}><path d="M0 1l14 5" stroke="#e22" strokeWidth="1.800" /><path d="M1 13l13-6" stroke="#1fae2f" strokeWidth="1.800" /><path d="M1 3l2 8 2-6 2 4 2-4v3" stroke="#c33" /></Svg>],
];

const SWATCHES = [
  "bg-white", "bg-[#d8d8d8]", "bg-[#b8b8b8]", "bg-[#989898]", "bg-[#787878]", "bg-[#2a2a2a]", "bg-[#c4d4ff]", "bg-[#7da2ff]", "bg-[#58d0ff]", "bg-[#2020f0]", "bg-[#3c50d8]", "bg-[#1c1ca8]", "bg-[#8a14c8]", "bg-[#f07cc0]",
  "bg-[#e05858]", "bg-[#ff1414]", "bg-[#f03030]", "bg-[#8c4614]", "bg-[#f08040]", "bg-[#ff9c80]", "bg-[#f0a030]", "bg-[#ffff14]", "bg-[#58f0d8]", "bg-[#80f080]", "bg-[#14f014]", "bg-[#50d850]", "bg-[#30b830]", "bg-[#108410]",
];

/* ---------- shared pieces ---------- */

const BAR = "bg-linear-to-b from-[#b6d5e3] to-[#9bbac8]";

function TitleBar({ active }: { active?: boolean }) {
  return (
    <div className={active ? "flex h-[17px] shrink-0 items-center gap-[2px] bg-linear-to-b from-[#79a9f8] to-[#5a92ef] pl-[2px] font-bold text-white" : `flex h-[16px] shrink-0 items-center gap-[2px] border-t border-[#7797a5] pl-[2px] text-[#222] ${BAR}`}>
      <LogoIcon white={active} />
      <button aria-label="Liste" className="flex items-center"><Tri c={active ? "#fff" : "#000"} /></button>
      <span>PXI</span>
      <button aria-label="Information" className="mr-[4px] ml-[4px] flex h-[9px] w-[9px] items-center justify-center bg-white text-[7px] font-bold text-[#7d9aa8]">i</button>
      <span className={active ? "bg-[#12b412] px-px py-[2px]" : "font-bold text-[#0aa50a]"}>4 895,6 (+0,09%)</span>
      <span className={active ? "font-bold" : "ml-px font-bold text-black"}>10:08:16</span>
      <span>France 40 Cash (1€)</span>
      <span className={active ? "mr-[4px] ml-auto flex items-center gap-[3px]" : "mr-[2px] ml-auto flex h-full items-center gap-[3px] bg-[#5f98f5] px-[2px]"}>
        <Keyboard />
        <WinCtl pin={active} />
      </span>
    </div>
  );
}

const OrderCount = ({ c, bg }: { c: string; bg: string }) => (
  <span className="flex items-center gap-[2px]"><b>0</b><Cross c={c} bg={bg} /><span className="ml-[3px]">/</span><b>0</b><Gears /></span>
);

function InfoRow({ wide }: { wide?: boolean }) {
  const cell = wide ? "flex items-center justify-center gap-[5px]" : "flex items-center gap-[4px]";
  return (
    <div className={wide ? "grid h-[15px] shrink-0 grid-cols-[211fr_211fr_210fr_190fr_244fr_186fr] items-center bg-[#9bbac8] pr-[87px] pl-[68px] text-[#222]" : "flex h-[15px] shrink-0 items-center justify-between bg-[#9bbac8] pr-[10px] pl-[7px] text-[#222]"}>
      <span className={cell}>Ordres : <OrderCount c="#999" bg="bg-[#e5e0da] p-px" /></span>
      <span className={cell}>Position : <OrderCount c="#e06868" bg="p-px" /></span>
      <span className={cell}>Durée pos. : <b>-</b></span>
      <span className={cell}>Gain latent : <b className="text-black">0,00 pts</b></span>
      <span className={cell}>Gain Jour : <b className="text-[#0aa50a]">4,60 pts</b></span>
      <span className={cell}><span>Trades jour : <b className="text-[#0aa50a]">5</b> / <b>0</b> / <b className="text-[#e01414]">0</b></span></span>
    </div>
  );
}

const Steps = () => (
  <span className="flex h-full w-[7px] flex-col items-center justify-between bg-[#bcd6e2] py-px">
    <Svg s={4} vb={4}><path d="M0 3h4L2 1z" fill="#123" /></Svg>
    <Svg s={4} vb={4}><path d="M0 1h4L2 3z" fill="#123" /></Svg>
  </span>
);

function Spinner({ label, value, cls }: { label: string; value: string; cls: string }) {
  return (
    <span className={`flex h-[13px] items-center border border-[#a9c4d0] bg-white ${cls}`}>
      <input aria-label={label} defaultValue={value} className="h-full min-w-0 flex-1 bg-transparent text-right outline-none" />
      <Steps />
    </span>
  );
}

function Drop({ label, value, cls }: { label: string; value: string; cls: string }) {
  return (
    <span className={`relative flex h-[13px] border border-[#a9c4d0] bg-white ${cls}`}>
      <select aria-label={label} className="h-full w-full appearance-none bg-transparent pl-px outline-none"><option>{value}</option></select>
      <span className="pointer-events-none absolute inset-y-0 right-0 flex w-[11px] items-center justify-center bg-[#b5d2df]"><Tri s={7} /></span>
    </span>
  );
}

const CHECK = "size-[9px] shrink-0 appearance-none border border-[#9aa9b0] bg-white checked:after:flex checked:after:size-full checked:after:items-center checked:after:justify-center checked:after:text-[9px] checked:after:leading-none checked:after:text-[#777] checked:after:content-['✓']";
const BOX = "rounded-[2px] border border-[#8a9aa2] bg-white text-center outline-none";

function Quote({ title, main, green }: { title: string; main: string; green?: boolean }) {
  return (
    <div className="flex w-[42px] flex-col items-center">
      <span className="h-[10px] leading-[10px]">{title}</span>
      <button className={green ? "flex h-[21px] w-full items-end justify-center rounded-[1px] bg-[#1fb524] text-white" : "flex h-[21px] w-full items-end justify-center rounded-[1px] bg-[#e54a4e] text-white"}>
        <span className="pb-[2px] text-[7px] leading-[8px]">4 8</span>
        <span className="pb-[2px] text-[14px] leading-[16px]">{main},</span>
        <span className="self-start pt-[4px] text-[7px] leading-[7px]">1</span>
      </button>
    </div>
  );
}

function TradeWidget() {
  return (
    <div className="flex h-full w-[247px] shrink-0 items-center">
      <Tri d="right" s={5} />
      <div className="flex h-full flex-1 items-start gap-[3px] rounded-l-[4px] border-l border-[#b9c9d0] bg-white text-[8px]">
        <div className="flex gap-px">
          <button aria-label="Réglages" className="mt-[11px] flex h-[13px] w-[13px] items-center justify-center rounded-[2px] border border-[#aaa]"><Wrench s={11} /></button>
          <label className="flex w-[35px] flex-col items-center leading-[10px]">Qté
            <input defaultValue="0.5" className="mt-px h-[13px] w-full border border-[#b9c9d0] bg-white pr-px text-right outline-none" />
          </label>
        </div>
        <button className="flex w-[23px] flex-col items-center border-l border-[#d0dade] leading-[10px]">Limite<LimitIcon a="#e22c2c" b="#1fae2f" /></button>
        <button className="flex w-[22px] flex-col items-center border-x border-[#d0dade] leading-[10px]">Stop<LimitIcon a="#1fae2f" b="#e22c2c" /></button>
        <Quote title="Vendre" main="95" />
        <Quote title="Acheter" main="96" green />
        <div className="flex flex-col gap-[3px] pt-[3px]">
          <div className="flex h-[12px] items-center gap-px">
            <label className="flex items-center gap-[2px] text-[#aaa]"><input type="checkbox" defaultChecked className={CHECK} />Sg</label>
            <input aria-label="Stop garanti" defaultValue="50" className={`h-[13px] w-[12px] ${BOX}`} />pts
          </div>
          <div className="flex h-[12px] items-center gap-px">
            <label className="flex w-[22px] items-center gap-[2px]"><input type="checkbox" className={CHECK} />L</label>
            <input aria-label="Limite pts" defaultValue="6" className={`h-[11px] w-[8px] text-[#999] ${BOX}`} />pts
          </div>
        </div>
      </div>
    </div>
  );
}

const Indicators = () => (
  <button aria-label="Indicateurs" className="flex h-[19px] shrink-0 items-center gap-[2px] border border-[#c3d0d6] bg-white px-px"><WaveIcon /><Tri s={7} /></button>
);

function ScrollRow({ cls, thumb }: { cls: string; thumb: string }) {
  return (
    <div className={`flex shrink-0 items-center gap-[5px] pl-[2px] pr-[5px] ${cls} ${BAR}`}>
      <button className="flex h-[15px] w-[49px] items-center justify-center gap-[3px] bg-linear-to-b from-[#3aa5e6] to-[#1b86cc] text-[8px] text-white">
        <Svg s={11} vb={11}><path d="M9 2 2.500 5.500 9 9" stroke="#fff" strokeWidth="1.500" /><circle cx="9" cy="2" r="1.800" fill="#fff" /><circle cx="2.500" cy="5.500" r="1.900" fill="#fff" /><circle cx="9" cy="9" r="1.800" fill="#fff" /></Svg>
        Partager
      </button>
      <button aria-label="Lier"><ChainIcon /></button>
      <button aria-label="Notes"><NoteIcon /></button>
      <button aria-label="Carnet"><BookIcon /></button>
      <div className="flex h-[12px] flex-1 items-center border-y border-[#a9a9c6]">
        <button aria-label="Défiler à gauche" className="flex h-full w-[12px] items-center justify-center bg-[#b8d3df]"><Tri d="left" s={7} /></button>
        <span className="flex h-full flex-1 justify-end bg-[#9bbac8]"><span className={`flex h-full items-center justify-center bg-[#acccd9] text-[#8aa] ${thumb}`}>·</span></span>
        <button aria-label="Défiler à droite" className="flex h-full w-[12px] items-center justify-center bg-[#b8d3df]"><Tri d="right" s={7} /></button>
      </div>
      <button aria-label="Configurer"><GreenWrench /></button>
      <button aria-label="Ajuster"><FitZoom /></button>
      <button aria-label="Zoom arrière"><Zoom sign="-" c="#fff" /></button>
      <button aria-label="Zoom avant"><Zoom sign="+" c="#fff" /></button>
    </div>
  );
}

function Deal({ title, price, green }: { title: string; price: string; green?: boolean }) {
  return (
    <button className={green ? "flex flex-col items-center bg-[#a9cfa9]" : "flex flex-col items-center bg-[#ecbaba]"}>
      <span className="mt-[3px] text-[17px] leading-[20px] text-white/60">{title}</span>
      <span className="mt-[6px] text-[40px] leading-[46px] text-black">{price}</span>
      <span className="mt-[2px] leading-[10px] text-[#222]">+ Stop (G) 50</span>
    </button>
  );
}

function OrderPanel() {
  return (
    <section className="relative flex shrink-0 flex-col border-b-2 border-l-2 border-[#4f8cf0] pr-px text-[#222]">
      <TitleBar active />
      <div className="grid h-[103px] grid-cols-[167fr_175fr_168fr] bg-[#cbdae1]">
        <dl className="grid grid-cols-[48px_1fr] grid-rows-[12px_12px_12px_15px_15px_14px] items-center border-r border-[#9bb3bf] pt-[13px] pl-[5px]">
          <dt>Gain latent :</dt><dd className="font-bold text-black">0,00 pts</dd>
          <dt>Gain Jour :</dt><dd className="font-bold text-[#0aa50a]">4,60 pts</dd>
          <dt>Trades jour :</dt><dd><b className="text-[#0aa50a]">5</b> / <b>0</b> / <b className="text-[#e01414]">0</b></dd>
          <dt>Ordres :</dt><dd><OrderCount c="#999" bg="bg-[#e5e0da] p-px" /></dd>
          <dt>Position :</dt><dd><OrderCount c="#e06868" bg="p-px" /></dd>
          <dt>Durée pos. :</dt><dd><b>-</b></dd>
        </dl>
        <div className="flex flex-col items-center border-r border-[#9bb3bf]">
          <label className="mt-[10px] flex flex-col items-center leading-[10px]">Qté
            <input defaultValue="0.5" className="mt-[1px] h-[23px] w-[57px] border border-[#b5c5cd] bg-white pr-px text-right text-[17px] text-black outline-none" />
          </label>
          <div className="mt-[5px] flex h-[15px] items-center gap-px">
            <label className="flex items-center gap-[2px] text-[#9aa6ac]"><input type="checkbox" defaultChecked className={CHECK} />Stop (G)</label>
            <input aria-label="Stop pts" defaultValue="50" className={`ml-[3px] h-[14px] w-[13px] ${BOX}`} />pts
            <label className="ml-[11px] flex items-center gap-[3px]"><input type="checkbox" className={CHECK} />Limite</label>
            <input aria-label="Limite pts" defaultValue="6" className={`ml-[3px] h-[14px] w-[8px] bg-transparent text-[#9aa6ac] ${BOX}`} />pts
          </div>
          <hr className="mt-[12px] w-[162px] border-[#9bb3bf]" />
          <div className="mt-[6px] flex gap-[56px] pr-[5px]">
            <Spinner label="Stop ticks" value="1" cls="w-[30px]" />
            <Spinner label="Limite ticks" value="1" cls="w-[30px]" />
          </div>
        </div>
        <div />
      </div>
      <div className="grid h-[89px] grid-cols-[167fr_175fr_168fr] border-t border-[#9bb3bf] bg-[#cbdae1]">
        <Deal title="Vendre 0,5" price="4 895,1" />
        <div className="grid grid-cols-2 grid-rows-[18px_1fr] text-[#9aa9b1]">
          <button className="border-r border-b border-[#9bb3bf]">Stop à 1 ticks</button>
          <button className="border-b border-[#9bb3bf]">Limite à 1 ticks</button>
          <button className="col-span-2">Pas de position</button>
        </div>
        <Deal title="Acheter 0,5" price="4 896,1" green />
      </div>
      <div className="flex h-[21px] items-stretch border-t border-[#9bb3bf] bg-[#cbdae1] text-[#9aa9b1]">
        <button aria-label="Disposition" className="flex w-[19px] items-center justify-center border-r border-[#9bb3bf]">
          <Svg s={16}><path d="M1 2h12v9H1z" fill="#f3d8d8" stroke="#444" /><path d="M9 2h4v9H9z" fill="#4fc45a" /><path d="M5 2v9M9 2v9M1 6.500h12" stroke="#444" /><path d="M9 12h5l-2.500 2z" fill="#000" /></Svg>
        </button>
        <button className="flex-1 border-r border-[#9bb3bf]">Inverser position</button>
        <button className="flex-[1.120]">Pas d'ordres en attente</button>
        <span className="flex items-center gap-[5px] border-l border-[#9bb3bf] px-[3px]">
          <button aria-label="Graphique"><Svg s={14}><rect width="14" height="13" fill="#fff" /><path d="M1 3h12" stroke="#e66" strokeDasharray="2 1" /><path d="M1 11h12" stroke="#4c4" strokeWidth="2" /><path d="M2 5l3 4 4-4 3-1" stroke="#2a2" strokeWidth="1.500" /><path d="M3 8l4 1 4-3" stroke="#c33" /></Svg></button>
          <button aria-label="Lier"><ChainIcon /></button>
          <button aria-label="Configurer"><Svg s={14}><rect x="2" y="1" width="6" height="11" fill="#5ec06a" /><rect x="8" y="3" width="5" height="3" fill="#d9585c" /><rect x="8" y="7" width="6" height="3" fill="#d9585c" /><path d="M2 12 7 7C6 4 8 2 11 3" stroke="#222" strokeWidth="1.800" /></Svg></button>
        </span>
      </div>
      <table className="w-full table-fixed bg-[#9bbac8]">
        <thead>
          <tr className="h-[12px] bg-linear-to-b from-[#4673a6] to-[#3d6696] text-white">
            <th scope="col" className="w-[27px] p-0"><span className="flex items-center gap-[3px] pl-[2px]"><Svg s={9} vb={10}><path d="M1 1h8v8H1z" stroke="#fff" strokeWidth="1.500" /><path d="M3 3l4 4" stroke="#fff" strokeWidth="1.500" /></Svg><Wrench c="#fff" s={10} /></span></th>
            <th scope="col" className="w-[146px] border-r border-[#7fa0c6] p-0 leading-[10px] font-normal">Qté</th>
            <th scope="col" className="border-r border-[#7fa0c6] p-0 leading-[10px] font-normal">Prix de revient unitaire</th>
            <th scope="col" className="w-[157px] p-0" aria-label="Sens"><span className="flex justify-center"><Svg s={9} vb={10}><path d="M5 0l4 5H7v3l-2 2-2-2V5H1z" fill="#fff" /></Svg></span></th>
          </tr>
        </thead>
        <tbody><tr className="h-[38px]"><td colSpan={4} /></tr></tbody>
      </table>
      <div className={`flex h-[12px] items-center justify-between pr-[3px] pl-px ${BAR}`}>
        <span className="flex flex-1 items-center gap-[2px]">Offre <span className="text-[#2a7fe0]">➔</span><b>0</b></span>
        <span>Spread: 1,0</span>
        <span className="flex flex-1 items-center justify-end gap-[2px]"><b>0</b><span className="-scale-x-100 text-[#2a7fe0]">➔</span> Demande</span>
      </div>
      <span className="absolute right-0 bottom-0 h-[52px] w-[3px] bg-[#0a0c14]" />
    </section>
  );
}

const MENU: [string, string][] = [["F", "ichier"], ["A", "ffichage"], ["T", "rading"], ["O", "bjets"], ["O", "ptions"], ["A", "ide"]];

export default function App() {
  return (
    <div className="flex min-h-screen flex-col bg-[#9bbac8] font-['Liberation_Sans',Arial,sans-serif] text-[8px] leading-[10px] text-[#222]">
      <header>
        <div className={`flex h-[15px] items-center pr-[2px] pl-px ${BAR}`}>
          <LogoIcon />
          <nav aria-label="Menu" className="ml-[3px] flex gap-[7px]">
            {MENU.map(([a, b]) => (
              <button key={a + b}><span className="underline">{a}</span>{b}</button>
            ))}
          </nav>
          <span className="ml-auto">DAX</span>
          <span className="mx-[4px] flex h-[13px] items-center gap-[2px] bg-[#26292c] px-[3px] font-bold text-white"><span className="text-[#9be02a]">ProRealTime</span> Complete</span>
          <span className="flex items-center gap-[3px]">
            <button aria-label="Épingler"><Svg s={8} vb={8}><path d="M0 4h3M4 1v6M4 4h3M7 2v4" stroke="#5f7d8a" strokeWidth="1.500" /></Svg></button>
            <button aria-label="Réduire"><Svg s={8} vb={8}><path d="M1 7h6" stroke="#7793a0" strokeWidth="1.500" /></Svg></button>
            <button aria-label="Fermer"><Svg s={8} vb={8}><path d="M1 1l6 6M7 1 1 7" stroke="#7793a0" strokeWidth="1.500" /></Svg></button>
          </span>
        </div>
        <div className={`flex h-[23px] items-center border-t border-[#8fb0be] pr-[3px] pl-[5px] ${BAR}`}>
          <label className="flex h-[14px] w-[98px] items-center bg-white">
            <input type="search" aria-label="Recherche" placeholder="Recherche ..." className="h-full min-w-0 flex-1 bg-transparent pl-px italic outline-none placeholder:text-[#aaa]" />
            <Svg s={12}><circle cx="8.500" cy="5" r="3.800" stroke="#222" strokeWidth="1.200" /><path d="M6 8l-4 5" stroke="#222" strokeWidth="1.600" /></Svg>
          </label>
          <button aria-label="Nouveau graphique" className="ml-[2px] flex w-[19px] justify-center"><Svg s={16}><rect x="3" y="3" width="10" height="10" fill="#f4fbff" stroke="#2c6fae" /><path d="M3 4h10" stroke="#2c86d8" strokeWidth="2" /><path d="M4 11l3-4 2 2 3-3" stroke="#1aa52a" strokeWidth="1.300" /><circle cx="3" cy="3" r="2.200" fill="#fff" stroke="#2c6fae" /></Svg></button>
          <button aria-label="Carnet" className="mr-[6px] flex w-[19px] justify-center"><BookIcon /></button>
          <button aria-label="Pointeur" className="flex h-[20px] w-[18px] items-center justify-center border-l border-[#7fa0ae] bg-[#8fa9b5]"><Svg><path d="M5 1l6 8-3 .2 1.500 3.500-1.600.6L6.400 9.800 5 11.500z" fill="#f3f3f3" stroke="#444" strokeWidth=".8" /></Svg></button>
          {TOOLS.map(([n, ic]) => (
            <button key={n} aria-label={n} className="flex w-[19px] shrink-0 items-center justify-center">{ic}</button>
          ))}
          <button aria-label="Texte" className="ml-[3px] flex size-[13px] items-center justify-center border border-r-2 border-b-2 border-[#333] bg-white font-['Liberation_Serif',serif] text-[10px] leading-none font-bold">T</button>
          <div className="ml-[4px] grid grid-cols-14 border border-[#8fb0be]">
            {SWATCHES.map((c, i) => (
              <button key={i} aria-label={`Couleur ${i + 1}`} className={`h-[8px] w-[8px] ${c}`} />
            ))}
          </div>
          <button className="ml-auto flex h-[16px] w-[44px] items-center justify-center gap-px bg-[#3fcf48]">Push+ <LogoIcon /></button>
          <button className="flex h-[16px] w-[53px] items-center justify-center gap-[3px] bg-[#74de7a]">DealThru
            <Svg s={13}><path d="M12 2C8 1 8 4 8.500 6" stroke="#e02c2c" strokeWidth="2" /><path d="M5.500 5h6l-3 3.500z" fill="#e02c2c" /><path d="M2 13c4 0 5-2 4-4" stroke="#168a2a" strokeWidth="2" /></Svg>
          </button>
        </div>
      </header>

      <main className="grid flex-1 grid-cols-[1407fr_513fr]">
        <section className="flex min-w-0 flex-col">
          <TitleBar />
          <InfoRow wide />
          <div className="flex h-[33px] shrink-0 items-center bg-linear-to-b from-[#9fbdca] to-[#f4f8fa] pr-[2px] pl-[192px]">
            <div className="flex gap-px"><Spinner label="Nombre d'unités" value="500" cls="w-[56px]" /><Drop label="Unités" value="(x) unités" cls="w-[61px]" /></div>
            <span className="flex-[251]" />
            <div className="flex gap-px"><Spinner label="Nombre de ticks" value="500" cls="w-[56px]" /><Drop label="Ticks" value="(x) ticks" cls="w-[61px]" /></div>
            <span className="flex-[251]" />
            <Indicators />
            <span className="flex-[193]" />
            <TradeWidget />
          </div>
          <div className="relative min-h-[400px] flex-1 bg-white">
            <MainChart />
            <div className="absolute top-0 left-[2px] flex h-[12px] items-center gap-[2px] bg-[#c5dbe6] px-px">Prix <Wrench /><Arrow /><Arrow up /></div>
          </div>
          <ScrollRow cls="h-[24px] border-b-2 border-[#3d5560]" thumb="w-[268px]" />
        </section>

        <aside className="flex min-w-0 flex-col">
          <TitleBar />
          <InfoRow />
          <div className="flex h-[33px] shrink-0 items-center justify-between bg-linear-to-b from-[#9fbdca] to-[#f4f8fa] pr-[2px] pl-[25px]">
            <Drop label="Nombre d'unités affichées" value="100 unités" cls="w-[61px]" />
            <Drop label="Unité de temps" value="5 minutes" cls="w-[62px]" />
            <Indicators />
            <TradeWidget />
          </div>
          <div className="relative min-h-[400px] flex-1 bg-white">
            <SideChart />
            <div className="absolute top-0 left-[2px] flex h-[12px] items-center gap-[2px] bg-[#b5d3e0] px-px">Prix <Wrench /><WinIcon /><CloseIcon /><Arrow /><Arrow up /></div>
            <div className="absolute top-[472px] left-[2px] flex h-[12px] items-center gap-[2px] bg-[#b5d3e0] px-px">Relative strength index (RSI) (21) Relative strength index (RSI) (14) <Wrench /><WinIcon /><CloseIcon /></div>
          </div>
          <ScrollRow cls="h-[21px]" thumb="w-[44px]" />
          <OrderPanel />
        </aside>
      </main>
    </div>
  );
}
